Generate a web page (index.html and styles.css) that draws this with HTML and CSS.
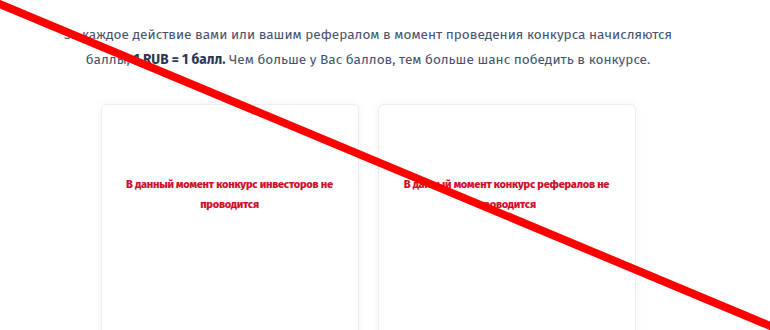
FILE: index.html
```html
<!DOCTYPE html>
<html lang="ru">
<head>
    <meta charset="UTF-8">
    <meta name="viewport" content="width=device-width, initial-scale=1.0">
    <title>Конкурсы</title>
    <link rel="stylesheet" href="styles.css">
</head>
<body>
    <div class="contest-section">
        <p class="contest-intro">
            За каждое действие вами или вашим рефералом в момент проведения конкурса начисляются
            баллы, <b>1 RUB = 1 балл.</b> Чем больше у Вас баллов, тем больше шанс победить в конкурсе.
        </p>

        <div class="contest-cards">
            <div class="contest-card">
                <div class="contest-empty">В данный момент конкурс инвесторов не проводится</div>
            </div>
            <div class="contest-card">
                <div class="contest-empty">В данный момент конкурс рефералов не проводится</div>
            </div>
        </div>
    </div>

    <!-- red cross-out line over the whole page -->
    <svg class="strike" width="770" height="330" viewBox="0 0 770 330">
        <line x1="-10" y1="0" x2="780" y2="330" stroke="#ff0000" stroke-width="8"></line>
    </svg>
</body>
</html>
```

FILE: styles.css
```css
body {
    margin: 0;
    background-color: #fff;
    font-family: "Fira Sans", "Open Sans", sans-serif;
    overflow: hidden;
}

.contest-section {
    width: 736px;
    padding-top: 22px;
}

.contest-intro {
    margin: 0 auto;
    width: 640px;
    text-align: center;
    font-size: 13.6px;
    line-height: 25px;
    color: #46526f;
}

.contest-intro b {
    color: #2b3654;
}

.contest-cards {
    display: grid;
    grid-template-columns: 258px 258px;
    gap: 19px;
    justify-content: center;
    margin-top: 32px;
}

.contest-card {
    background-color: #fff;
    border: 1px solid #eeeef2;
    border-radius: 6px;
    box-shadow: 0 0 8px rgba(30, 40, 80, 0.05);
    height: 260px;
    padding: 70px 22px 0;
    box-sizing: border-box;
}

.contest-empty {
    text-align: center;
    font-size: 11px;
    font-weight: 800;
    letter-spacing: -0.2px;
    line-height: 20px;
    color: #d0102b;
}

.strike {
    position: absolute;
    left: 0;
    top: 0;
}
```
